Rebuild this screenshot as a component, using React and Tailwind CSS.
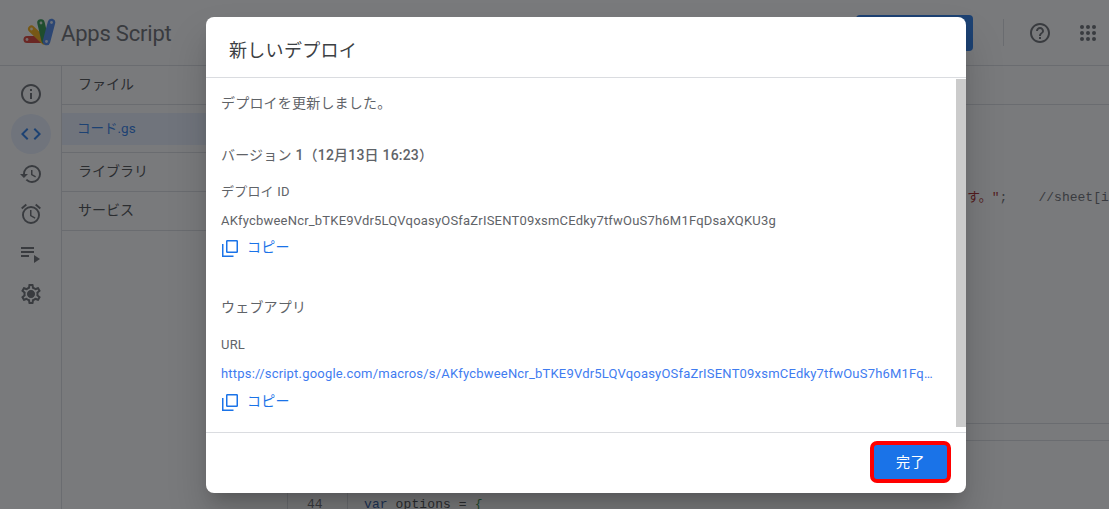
import React from "react";
import { MdOutlineInfo, MdCode, MdHistory, MdOutlineAlarm, MdOutlineSettings, MdHelpOutline } from "react-icons/md";

const font = "font-['Roboto','Noto_Sans_CJK_JP',sans-serif]";

function Logo() {
  const dots = [
    [7, 21.5],
    [11.5, 11],
    [21, 5],
    [31.5, 4.5],
    [26.5, 23.5],
  ];
  return (
    <svg width="36" height="30" viewBox="0 0 36 30">
      <path d="M7 21.5 H21" stroke="#d93025" strokeWidth="7" strokeLinecap="round" />
      <path d="M11.5 11 L24 23" stroke="#f9ab00" strokeWidth="7" strokeLinecap="round" />
      <path d="M21 5 L25 22" stroke="#1e8e3e" strokeWidth="7.5" strokeLinecap="round" />
      <path d="M31.5 4.5 L26.5 23.5" stroke="#3f7de8" strokeWidth="7.5" strokeLinecap="round" />
      {dots.map(([x, y], i) => (
        <circle key={i} cx={x} cy={y} r="1.4" fill="#ffffff" fillOpacity="0.8" />
      ))}
    </svg>
  );
}

function CopyIcon() {
  return (
    <svg width="16" height="17" viewBox="0 0 16 17" fill="none" stroke="#1a73e8" strokeWidth="1.5">
      <rect x="4.75" y="0.75" width="10.5" height="11.5" rx="0.6" />
      <path d="M0.75 4 V16.25 H11.5" />
    </svg>
  );
}

function Grid() {
  return (
    <div className="grid grid-cols-3 gap-[2px] w-[16px]">
      {Array.from({ length: 9 }).map((_, i) => (
        <span key={i} className="w-[4px] h-[4px] rounded-full bg-[#5f6368]" />
      ))}
    </div>
  );
}

function Background() {
  return (
    <div className="w-[1109px] h-[509px] flex flex-col bg-white overflow-hidden">
      <header className="h-[66px] shrink-0 flex items-center border-b border-[#dadce0]">
        <div className="ml-[20px] flex items-center gap-[5px] pt-[1px]">
          <Logo />
          <span className="text-[22px] text-[#5f6368] tracking-[-0.2px]">Apps Script</span>
        </div>
        <div className="ml-auto flex items-center">
          <div className="w-[117px] h-[36px] rounded-[4px] bg-[#1a73e8]" />
          <div className="w-px h-[27px] bg-[#dadce0] ml-[30px]" />
          <MdHelpOutline className="ml-[24px] text-[#5f6368]" size={24} />
          <div className="ml-[28px] mr-[13px]"><Grid /></div>
        </div>
      </header>
      <div className="flex flex-1 min-h-0">
        <nav className="w-[62px] shrink-0 border-r border-[#dadce0] flex flex-col items-center pt-[8px] text-[#5f6368]">
          <div className="h-[40px] flex items-center justify-center"><MdOutlineInfo size={24} /></div>
          <div className="h-[40px] w-[40px] rounded-full bg-[#e8f0fe] flex items-center justify-center text-[#1a73e8]">
            <MdCode size={24} />
          </div>
          <div className="h-[40px] flex items-center justify-center"><MdHistory size={24} /></div>
          <div className="h-[40px] flex items-center justify-center"><MdOutlineAlarm size={24} /></div>
          <div className="h-[40px] flex items-center justify-center">
            <svg width="24" height="24" viewBox="0 0 24 24" fill="#5f6368">
              <path d="M2 5h13v2H2zM2 9h13v2H2zM2 13h8v2H2zM15 13l6 4-6 4z" />
            </svg>
          </div>
          <div className="relative h-[40px] flex items-center justify-center">
            <MdOutlineSettings size={24} />
            <span className="absolute left-1/2 top-1/2 w-[7px] h-[7px] -translate-x-1/2 -translate-y-1/2 rounded-full bg-[#5f6368]" />
          </div>
        </nav>
        <aside className="w-[226px] shrink-0 border-r border-[#dadce0] text-[14px] text-[#3c4043]">
          <div className="h-[39px] pl-[16px] pb-[2px] flex items-center border-b border-[#dadce0]">ファイル</div>
          <div className="mt-[8px] h-[32px] pl-[15px] pb-[2px] flex items-center bg-[#e8f0fe] text-[#1a73e8] text-[13.5px]">コード.gs</div>
          <div className="mt-[7px] h-[40px] pl-[16px] pb-[2px] flex items-center border-y border-[#dadce0]">ライブラリ</div>
          <div className="h-[39px] pl-[16px] pb-[2px] flex items-center border-b border-[#dadce0]">サービス</div>
        </aside>
        <main className="flex-1 min-w-0 flex flex-col font-['Liberation_Mono','Noto_Sans_CJK_JP',monospace] text-[13px] text-[#5f6368]">
          <div className="h-[39px] shrink-0 border-b border-[#dadce0]" />
          <div className="flex-1 min-h-0 pt-[84px] pl-[679px] whitespace-nowrap overflow-hidden leading-[18px]">
            <span className="text-[#a31515]">す。"</span>;&nbsp;&nbsp;&nbsp;&nbsp;//sheet[i
          </div>
          <div className="h-[17px] shrink-0 border-t border-[#dadce0]" />
          <div className="h-[69px] shrink-0 border-t border-[#dadce0] flex">
            <span className="w-[60px] pl-[19px] pt-[55px] leading-[18px] border-r border-[#dadce0]">44</span>
            <span className="pl-[16px] pt-[55px] leading-[18px] text-[#3c4043] tracking-[0.1px]">
              <span className="text-[#1a4fa0]">var</span> options = <span className="text-[#1e8e3e]">{"{"}</span>
            </span>
          </div>
        </main>
      </div>
    </div>
  );
}

function CopyRow() {
  return (
    <div className="flex items-center gap-[9px] h-[24px] pl-[1px] text-[14px] tracking-[0.2px] text-[#1a73e8]">
      <CopyIcon />
      <span className="-mt-[1px]">コピー</span>
    </div>
  );
}

function Dialog() {
  return (
    <div className="absolute left-[206px] top-[17px] w-[760px] h-[476px] bg-white rounded-[8px] shadow-[0_11px_15px_-7px_rgba(0,0,0,0.2),0_24px_38px_3px_rgba(0,0,0,0.14)] flex flex-col overflow-hidden">
      <div className="h-[61px] shrink-0 flex items-center pl-[23px] pt-[6px] border-b border-[#dadce0] text-[18px] tracking-[0.3px] text-[#3c4043]">新しいデプロイ</div>
      <div className="flex-1 min-h-0 flex">
        <div className="flex-1 min-w-0 pl-[15px] pr-[22px] text-[#5f6368] tracking-[0.2px]">
          <div className="text-[14px] leading-[18px] mt-[16px]">デプロイを更新しました。</div>
          <div className="text-[14px] leading-[20px] mt-[33px]">
            バージョン <span className="font-medium">1（12月13日 16:23）</span>
          </div>
          <div className="mt-[19px] text-[13px] leading-[16px]">デプロイ ID</div>
          <div className="mt-[13px] text-[13px] leading-[16px] whitespace-nowrap">AKfycbweeNcr_bTKE9Vdr5LQVqoasyOSfaZrISENT09xsmCEdky7tfwOuS7h6M1FqDsaXQKU3g</div>
          <div className="mt-[7px]"><CopyRow /></div>
          <div className="text-[14px] leading-[20px] mt-[37px]">ウェブアプリ</div>
          <div className="mt-[20px] text-[13px] leading-[16px]">URL</div>
          <div className="mt-[13px] text-[13px] leading-[16px] truncate text-[#3f7cf0]">https://script.google.com/macros/s/AKfycbweeNcr_bTKE9Vdr5LQVqoasyOSfaZrISENT09xsmCEdky7tfwOuS7h6M1FqDsaXQKU3g/exec</div>
          <div className="mt-[8px]"><CopyRow /></div>
        </div>
        <div className="w-[10px] shrink-0 pt-[1px] pb-[5px]"><div className="h-full bg-[#cbcbcb]" /></div>
      </div>
      <div className="h-[61px] shrink-0 border-t border-[#dadce0] flex items-center justify-end pr-[15px]">
        <button className="w-[81px] h-[42px] rounded-[7px] border-[4px] border-[#ff0000] bg-[#1a73e8] text-white text-[14px] tracking-[0.5px] -mt-[2px]">完了</button>
      </div>
    </div>
  );
}

export default function App() {
  return (
    <div className={`relative w-[1109px] h-[509px] overflow-hidden ${font}`}>
      <Background />
      <div className="absolute inset-0 bg-[#202124]/60" />
      <Dialog />
    </div>
  );
}
